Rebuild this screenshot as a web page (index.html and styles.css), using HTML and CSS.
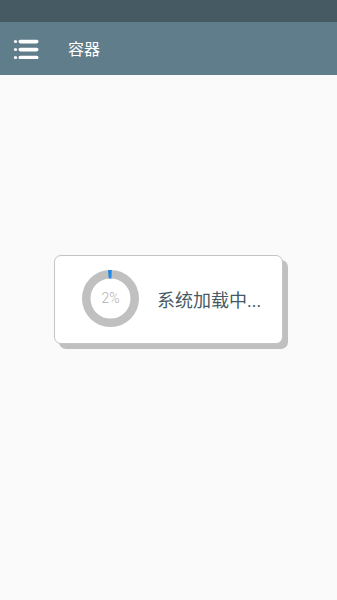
FILE: index.html
```html
<!DOCTYPE html>
<html>
<head>
<meta charset="utf-8">
<link rel="stylesheet" href="styles.css">
</head>
<body>
<div class="status"></div>
<header class="toolbar">
  <svg class="menu" width="26" height="20" viewBox="0 0 26 20">
    <g fill="#fff">
      <circle cx="2.5" cy="2.5" r="1.6"/>
      <circle cx="2.5" cy="10.5" r="1.6"/>
      <circle cx="2.5" cy="18.5" r="1.6"/>
      <rect x="5.5" y="0.8" width="20" height="3.6" rx="1.8"/>
      <rect x="5.5" y="8.8" width="20" height="3.6" rx="1.8"/>
      <rect x="5.5" y="16.8" width="20" height="3.6" rx="1.8"/>
    </g>
  </svg>
  <span class="title">容器</span>
</header>
<main class="content">
  <div class="card">
    <div class="ring">
      <svg width="57" height="57" viewBox="0 0 57 57">
        <circle cx="28.5" cy="28.5" r="24.25" fill="none" stroke="#c0c0c0" stroke-width="8.5"/>
        <circle cx="28.5" cy="28.5" r="24.25" fill="none" stroke="#1e88e5" stroke-width="8.5" stroke-dasharray="3.3 200" transform="rotate(-95 28.5 28.5)"/>
      </svg>
      <span class="pct">2%</span>
    </div>
    <span class="msg">系统加载中...</span>
  </div>
</main>
</body>
</html>
```
FILE: styles.css
```css
html, body {
  margin: 0;
  padding: 0;
}
body {
  width: 337px;
  height: 600px;
  background: #fafafa;
  font-family: Roboto, "Noto Sans CJK SC", sans-serif;
  display: flex;
  flex-direction: column;
}
.status {
  height: 22px;
  background: #465a64;
}
.toolbar {
  height: 53px;
  background: #607d8b;
  display: flex;
  align-items: center;
  padding-left: 13px;
  box-sizing: border-box;
}
.menu {
  display: block;
  margin-top: 1px;
}
.title {
  color: #fff;
  font-size: 16px;
  margin-left: 29px;
  margin-top: -2px;
}
.content {
  flex: 1;
  position: relative;
}
.card {
  position: absolute;
  left: 54px;
  top: 180px;
  width: 229px;
  height: 89px;
  box-sizing: border-box;
  background: #fff;
  border: 1px solid #c4c4c4;
  border-radius: 7px;
  box-shadow: 5px 5px 0 0 #c0c0c0;
  display: flex;
  align-items: center;
  padding-left: 27px;
}
.ring {
  position: relative;
  width: 57px;
  height: 57px;
  margin-top: -3px;
}
.ring svg {
  display: block;
}
.pct {
  position: absolute;
  inset: 0;
  display: flex;
  align-items: center;
  justify-content: center;
  font-size: 14px;
  font-weight: 300;
  color: #b0b0b0;
}
.msg {
  margin-left: 18px;
  font-size: 18px;
  color: #455a64;
  margin-top: -2px;
}
```
